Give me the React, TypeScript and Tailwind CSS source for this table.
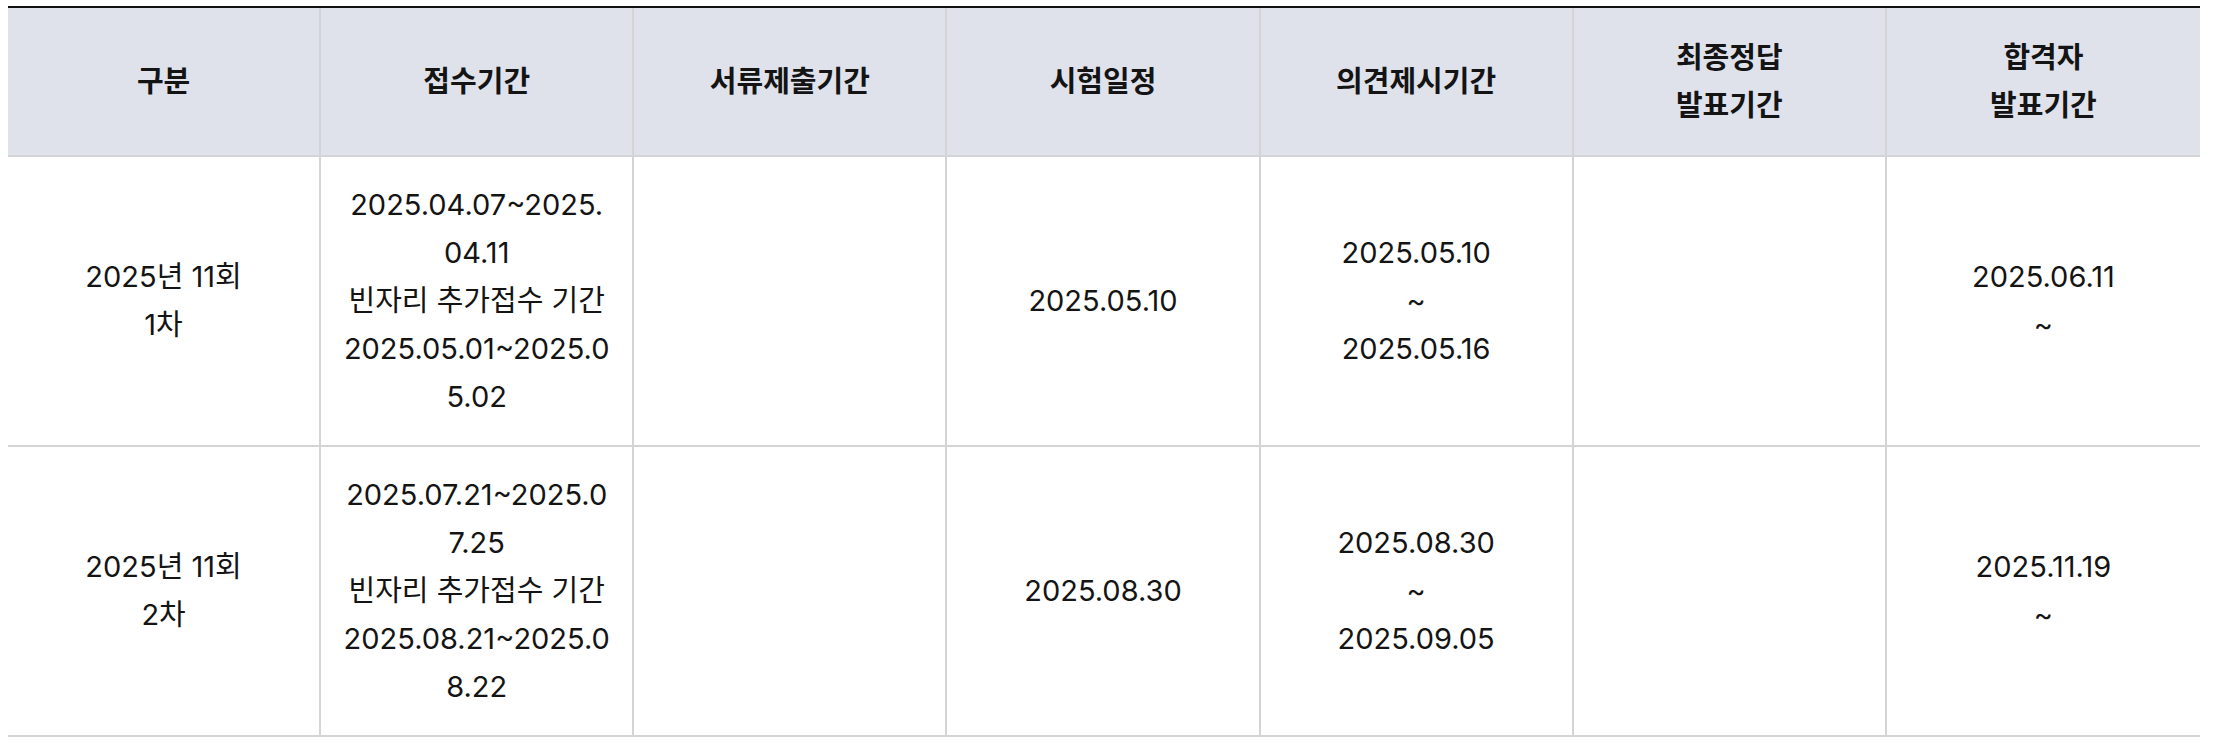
import React from "react";

type Row = {
  round: string[];
  receipt: string[];
  docs: string[];
  exam: string[];
  objection: string[];
  finalAnswer: string[];
  passers: string[];
};

const headers: string[][] = [
  ["구분"],
  ["접수기간"],
  ["서류제출기간"],
  ["시험일정"],
  ["의견제시기간"],
  ["최종정답", "발표기간"],
  ["합격자", "발표기간"],
];

const rows: Row[] = [
  {
    round: ["2025년 11회", "1차"],
    receipt: ["2025.04.07~2025.", "04.11", "빈자리 추가접수 기간", "2025.05.01~2025.0", "5.02"],
    docs: [],
    exam: ["2025.05.10"],
    objection: ["2025.05.10", "~", "2025.05.16"],
    finalAnswer: [],
    passers: ["2025.06.11", "~"],
  },
  {
    round: ["2025년 11회", "2차"],
    receipt: ["2025.07.21~2025.0", "7.25", "빈자리 추가접수 기간", "2025.08.21~2025.0", "8.22"],
    docs: [],
    exam: ["2025.08.30"],
    objection: ["2025.08.30", "~", "2025.09.05"],
    finalAnswer: [],
    passers: ["2025.11.19", "~"],
  },
];

const Cell = (props: { lines: string[]; last?: boolean; head?: boolean }) => {
  return (
    <div
      className={
        "flex flex-col items-center justify-center text-center " +
        (props.last ? "" : "border-r-2 border-[#d4d4d6] ") +
        (props.head ? "font-bold" : "font-normal")
      }
    >
      {props.lines.map((line, i) => (
        <div key={i}>{line}</div>
      ))}
    </div>
  );
};

export default function App() {
  return (
    <div
      className="bg-white w-[2216px] h-[754px] pt-[6px] pl-[8px] text-[#141414] text-[29px] leading-[48px]"
      style={{ fontFamily: 'Inter, "Noto Sans CJK KR", sans-serif' }}
    >
      <div className="w-[2192px] border-t-2 border-[#111111]">
        <div className="grid grid-cols-7 h-[149px] bg-[#dfe2eb] border-b-2 border-[#d4d4d6]">
          {headers.map((h, i) => (
            <Cell key={i} lines={h} head last={i === headers.length - 1} />
          ))}
        </div>
        {rows.map((r, i) => {
          const cols = [r.round, r.receipt, r.docs, r.exam, r.objection, r.finalAnswer, r.passers];
          return (
            <div key={i} className="grid grid-cols-7 h-[290px] border-b-2 border-[#d4d4d6]">
              {cols.map((c, j) => (
                <Cell key={j} lines={c} last={j === cols.length - 1} />
              ))}
            </div>
          );
        })}
      </div>
    </div>
  );
}
